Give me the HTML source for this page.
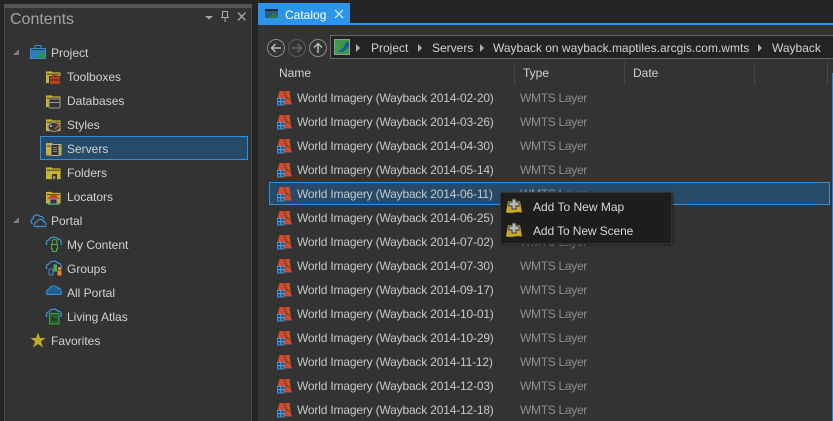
<!DOCTYPE html>
<html><head><meta charset="utf-8">
<style>
html,body{margin:0;padding:0;background:#242424;width:833px;height:421px;overflow:hidden}
body{position:relative;font-family:"Liberation Sans",sans-serif;font-size:12px;color:#cfd3d6}
.a{position:absolute}
.t{position:absolute;white-space:nowrap;line-height:16px;height:16px}
.r{color:#c4c8cb;letter-spacing:-.18px}
.g{color:#8f8f8f;letter-spacing:-.3px}
svg{position:absolute;overflow:visible}
</style></head><body>
<svg width="0" height="0" style="position:absolute">
<defs>
<symbol id="lyr" viewBox="0 0 16 16"><path d="M3.500 1H13.500L15.500 14.500H8.500V8H1.500Z" fill="#cc4f2a"/><path d="M8 1C8.500 5 10 8 15 10.500M11 7.500L9 10.500" stroke="#6a3020" stroke-width=".8" fill="none"/><path d="M1.500 8.500h3v3h-3zM5 8.500h3v3h-3zM1.500 12h3v3h-3zM5 12h3v3h-3z" fill="#2b3a46" stroke="#3d9be0" stroke-width=".9"/></symbol>
<symbol id="fld" viewBox="0 0 16 14"><path d="M0 1H6L7 2H15.500V13.500H0Z" fill="#c8b233"/><path d="M1 3.500H14.500V4.500H1Z" fill="#333"/></symbol>
<symbol id="add" viewBox="0 0 16 16"><path d="M2 3H14L16 14.500C11 13 6 16 0 14.500Z" fill="#c4ac2c"/><path d="M6 1H10V4H13V8H10V11H6V8H3V4H6Z" fill="#b8b8b8" stroke="#3a3a3a" stroke-width="1"/></symbol>
</defs></svg>

<!-- left panel -->
<div class="a" style="left:4px;top:4px;width:248px;height:417px;background:#333;border-right:1px solid #484848;border-left:1px solid #484848;box-sizing:border-box"></div>
<div class="a" style="left:4px;top:4px;width:248px;height:4px;background:#555"></div>
<div class="t" style="left:10px;top:11px;font-size:16px;line-height:18px;height:18px;color:#a3a3a3">Contents</div>
<svg style="left:200px;top:8px" width="50" height="16"><path d="M5 8H13L9 11.500Z" fill="#a8a8a8"/><path d="M22.500 3.500H27.500V9.500H22.500ZM21 9.500H29M25 10V14" stroke="#aaa" fill="none"/><path d="M38 4.500L45.500 12.500M45.500 4.500L38 12.500" stroke="#a8a8a8" stroke-width="1.300"/></svg>

<div class="a" style="left:40px;top:136px;width:208px;height:24px;background:#264a68;border:1px solid #2e8fe0;box-sizing:border-box"></div>

<svg style="left:12px;top:47px" width="10" height="10"><path d="M7 2V8H1Z" fill="#7d7d7d"/></svg>
<svg style="left:12px;top:215px" width="10" height="10"><path d="M7 2V8H1Z" fill="#7d7d7d"/></svg>

<!-- Project icon -->
<svg style="left:30px;top:44px" width="16" height="16"><path d="M.5 4.500H15.500V14.500H.5ZM5 4V1.500H11V4" fill="none" stroke="#3b8fd0"/><rect x="1" y="6" width="14" height="8" fill="#2f7ab8"/><path d="M6 14L10 9L15 7.500V14Z" fill="#2f8f52"/></svg>
<div class="t" style="left:51px;top:45px">Project</div>

<svg style="left:46px;top:70px" width="15" height="14"><use href="#fld"/><rect x="3" y="6" width="12" height="8" fill="#333"/><rect x="4" y="7" width="10" height="7" fill="#b8401f"/><rect x="7" y="5.500" width="4" height="2" fill="none" stroke="#b8401f"/><rect x="4" y="9.500" width="10" height="1" fill="#4a2a20"/></svg>
<div class="t" style="left:67px;top:69px">Toolboxes</div>

<svg style="left:46px;top:94px" width="15" height="14"><use href="#fld"/><rect x="3" y="5" width="11" height="9" rx="1" fill="#333" stroke="#999"/><path d="M3 8.500H14" stroke="#999"/></svg>
<div class="t" style="left:67px;top:93px">Databases</div>

<svg style="left:46px;top:118px" width="15" height="14"><use href="#fld"/><ellipse cx="8" cy="9" rx="6" ry="4.500" fill="#3a3a3a" stroke="#999"/><circle cx="5" cy="8" r="1" fill="#c0c0c0"/><path d="M9 11L14 6" stroke="#c85a30" stroke-width="1.500"/></svg>
<div class="t" style="left:67px;top:117px">Styles</div>

<svg style="left:46px;top:142px" width="15" height="14"><path d="M0 1H6L7 2H15.500V13.500H0Z" fill="#c8b233"/><path d="M1 3.500H14.500V4.500H1Z" fill="#264a68"/><rect x="5" y="2.500" width="8" height="11" fill="#333" stroke="#aaa"/><path d="M7 5.500H11M7 7.500H11M7 9.500H11" stroke="#888"/></svg>
<div class="t" style="left:67px;top:141px">Servers</div>

<svg style="left:46px;top:166px" width="15" height="14"><use href="#fld"/><path d="M6 8H11V14H6Z" fill="#333"/><path d="M7 9L10 11.500L7 14Z" fill="#999"/></svg>
<div class="t" style="left:67px;top:165px">Folders</div>

<svg style="left:46px;top:190px" width="15" height="15"><use href="#fld"/><path d="M1 9L7.500 3.500L14 9Z" fill="#c8401f"/><rect x="4" y="9" width="7" height="5" fill="#333" stroke="#6aa8d8"/><path d="M2 14.500H13" stroke="#3f9d50"/></svg>
<div class="t" style="left:67px;top:189px">Locators</div>

<svg style="left:30px;top:212px" width="17" height="16"><path d="M2.500 12C.5 11 .5 7.500 3 7C3 3 8 1.500 10 4.500C12 4 13.500 5.500 13.500 7" fill="none" stroke="#3a90d4" stroke-width="1.200"/><path d="M5 14.500C3.500 12.500 4.500 10 7 10C8 6.500 13 7 13.500 9.500C15.500 9.500 16.500 12.500 15.500 14.500Z" fill="#333" stroke="#3a90d4" stroke-width="1.200"/></svg>
<div class="t" style="left:51px;top:213px">Portal</div>

<svg style="left:46px;top:236px" width="16" height="16"><path d="M1 9C-.5 6 1 4 3 4C4 1 10 0 11.500 3C14 2.500 16 5 15 9" fill="none" stroke="#3a90d4" stroke-width="1.300"/><circle cx="8.500" cy="6" r="2.500" fill="#333" stroke="#4cb050"/><path d="M5.500 8.500H11.500V13H10.500V15.500H6.500V13H5.500Z" fill="#333" stroke="#4cb050"/></svg>
<div class="t" style="left:67px;top:237px">My Content</div>

<svg style="left:46px;top:260px" width="16" height="16"><path d="M1 9C-.5 6 1 4 3 4C4 1 10 0 11.500 3C14 2.500 16 5 15 9" fill="none" stroke="#3a90d4" stroke-width="1.300"/><rect x="7.500" y="4.500" width="3.500" height="7" fill="#4cb050"/><rect x="3" y="9" width="4" height="6" rx="1" fill="#333" stroke="#3a90d4"/><rect x="12" y="7" width="3" height="3" fill="#e08a30"/><rect x="11.500" y="10.500" width="4" height="5" fill="#e08a30"/></svg>
<div class="t" style="left:67px;top:261px">Groups</div>

<svg style="left:46px;top:284px" width="16" height="12"><path d="M1 10.500C-.5 8 1 5.500 3 5.500C4 1 10 1 11.500 4C14 3.500 16.500 7 15 10.500Z" fill="#1f5f90" stroke="#3a90d4"/></svg>
<div class="t" style="left:67px;top:285px">All Portal</div>

<svg style="left:46px;top:308px" width="16" height="17"><path d="M1 9C-.5 6 1 4 3 4C4 1 10 0 11.500 3C14 2.500 16 5 15 9" fill="none" stroke="#3a90d4" stroke-width="1.300"/><rect x="3.500" y="5.500" width="9.500" height="10.500" fill="#2c5a30" stroke="#44a04a"/><path d="M6 9H8V11H11V12.500H6Z" fill="#1c3a1e"/></svg>
<div class="t" style="left:67px;top:309px">Living Atlas</div>

<svg style="left:30px;top:332px" width="16" height="16"><path d="M8 .5L10 6H15.500L11 9.500L13 15.500L8 12L3 15.500L5 9.500L.5 6H6Z" fill="#c2ab2c"/></svg>
<div class="t" style="left:51px;top:333px">Favorites</div>

<!-- right pane -->
<div class="a" style="left:258px;top:25px;width:575px;height:396px;background:#333"></div>
<div class="a" style="left:258px;top:3px;width:92px;height:20px;background:#2b95ec"></div>
<div class="a" style="left:258px;top:23px;width:575px;height:2px;background:#2b95ec"></div>
<svg style="left:265px;top:9px" width="14" height="10"><rect width="13" height="9" fill="#2a5d7a"/><rect width="13" height="2" fill="#1f2f3a"/><path d="M3 9L8 4L13 6V9Z" fill="#2d7a3a"/></svg>
<div class="t" style="left:285px;top:7px;color:#fff">Catalog</div>
<svg style="left:334px;top:9px" width="10" height="10"><path d="M1 1L9 9M9 1L1 9" stroke="#dff0ff" stroke-width="1.200"/></svg>

<!-- nav -->
<svg style="left:266px;top:38px" width="64" height="20">
<circle cx="10" cy="10" r="8.500" fill="#333" stroke="#8a8a8a"/><path d="M15 10H6M9.500 6L5.500 10L9.500 14" stroke="#b8b8b8" stroke-width="1.500" fill="none"/>
<circle cx="31" cy="10" r="8.500" fill="#333" stroke="#5a5a5a"/><path d="M26 10H35M31.500 6L35.500 10L31.500 14" stroke="#666" stroke-width="1.500" fill="none"/>
<circle cx="52" cy="10" r="8.500" fill="#333" stroke="#8a8a8a"/><path d="M52 15V6M48 9.500L52 5.500L56 9.500" stroke="#b8b8b8" stroke-width="1.500" fill="none"/>
</svg>
<div class="a" style="left:330px;top:35px;width:504px;height:24px;background:#232323;border:1px solid #666;box-sizing:border-box"></div>
<svg style="left:334px;top:39px" width="17" height="17"><rect x=".5" y=".5" width="15" height="15" fill="#3c9a48" stroke="#999"/><path d="M4 13L9 9L12 3H15V8L9 13Z" fill="#1c5f96"/></svg>
<svg style="left:355px;top:44px" width="8" height="8"><path d="M1 0L5 4L1 8Z" fill="#b0b0b0"/></svg>
<svg style="left:417px;top:44px" width="8" height="8"><path d="M1 0L5 4L1 8Z" fill="#b0b0b0"/></svg>
<svg style="left:479px;top:44px" width="8" height="8"><path d="M1 0L5 4L1 8Z" fill="#b0b0b0"/></svg>
<svg style="left:757px;top:44px" width="8" height="8"><path d="M1 0L5 4L1 8Z" fill="#b0b0b0"/></svg>
<div class="t" style="left:371px;top:40px">Project</div>
<div class="t" style="left:432px;top:40px">Servers</div>
<div class="t" style="left:493px;top:40px">Wayback on wayback.maptiles.arcgis.com.wmts</div>
<div class="t" style="left:772px;top:40px">Wayback</div>

<!-- header -->
<div class="t" style="left:279px;top:65px">Name</div>
<div class="t" style="left:523px;top:65px">Type</div>
<div class="t" style="left:633px;top:65px">Date</div>
<div class="a" style="left:514px;top:62px;width:1px;height:23px;background:#484848"></div>
<div class="a" style="left:624px;top:62px;width:1px;height:23px;background:#484848"></div>
<div class="a" style="left:754px;top:62px;width:1px;height:23px;background:#484848"></div>
<div class="a" style="left:827px;top:62px;width:1px;height:23px;background:#484848"></div>

<!-- selected row -->
<div class="a" style="left:269px;top:182px;width:561px;height:23px;background:#264a68;border:1px solid #2e8fe0;box-sizing:border-box"></div>
<div class="a" style="left:832px;top:73px;width:1px;height:348px;background:#2b7fc4"></div>

<!-- rows -->
<svg style="left:276px;top:90px" width="16" height="16"><use href="#lyr"/></svg><div class="t r" style="left:297px;top:90px">World Imagery (Wayback 2014-02-20)</div><div class="t g" style="left:520px;top:90px">WMTS Layer</div>
<svg style="left:276px;top:114px" width="16" height="16"><use href="#lyr"/></svg><div class="t r" style="left:297px;top:114px">World Imagery (Wayback 2014-03-26)</div><div class="t g" style="left:520px;top:114px">WMTS Layer</div>
<svg style="left:276px;top:138px" width="16" height="16"><use href="#lyr"/></svg><div class="t r" style="left:297px;top:138px">World Imagery (Wayback 2014-04-30)</div><div class="t g" style="left:520px;top:138px">WMTS Layer</div>
<svg style="left:276px;top:162px" width="16" height="16"><use href="#lyr"/></svg><div class="t r" style="left:297px;top:162px">World Imagery (Wayback 2014-05-14)</div><div class="t g" style="left:520px;top:162px">WMTS Layer</div>
<svg style="left:276px;top:186px" width="16" height="16"><use href="#lyr"/></svg><div class="t r" style="left:297px;top:186px">World Imagery (Wayback 2014-06-11)</div><div class="t g" style="left:520px;top:186px">WMTS Layer</div>
<svg style="left:276px;top:210px" width="16" height="16"><use href="#lyr"/></svg><div class="t r" style="left:297px;top:210px">World Imagery (Wayback 2014-06-25)</div><div class="t g" style="left:520px;top:210px">WMTS Layer</div>
<svg style="left:276px;top:234px" width="16" height="16"><use href="#lyr"/></svg><div class="t r" style="left:297px;top:234px">World Imagery (Wayback 2014-07-02)</div><div class="t g" style="left:520px;top:234px">WMTS Layer</div>
<svg style="left:276px;top:258px" width="16" height="16"><use href="#lyr"/></svg><div class="t r" style="left:297px;top:258px">World Imagery (Wayback 2014-07-30)</div><div class="t g" style="left:520px;top:258px">WMTS Layer</div>
<svg style="left:276px;top:282px" width="16" height="16"><use href="#lyr"/></svg><div class="t r" style="left:297px;top:282px">World Imagery (Wayback 2014-09-17)</div><div class="t g" style="left:520px;top:282px">WMTS Layer</div>
<svg style="left:276px;top:306px" width="16" height="16"><use href="#lyr"/></svg><div class="t r" style="left:297px;top:306px">World Imagery (Wayback 2014-10-01)</div><div class="t g" style="left:520px;top:306px">WMTS Layer</div>
<svg style="left:276px;top:330px" width="16" height="16"><use href="#lyr"/></svg><div class="t r" style="left:297px;top:330px">World Imagery (Wayback 2014-10-29)</div><div class="t g" style="left:520px;top:330px">WMTS Layer</div>
<svg style="left:276px;top:354px" width="16" height="16"><use href="#lyr"/></svg><div class="t r" style="left:297px;top:354px">World Imagery (Wayback 2014-11-12)</div><div class="t g" style="left:520px;top:354px">WMTS Layer</div>
<svg style="left:276px;top:378px" width="16" height="16"><use href="#lyr"/></svg><div class="t r" style="left:297px;top:378px">World Imagery (Wayback 2014-12-03)</div><div class="t g" style="left:520px;top:378px">WMTS Layer</div>
<svg style="left:276px;top:402px" width="16" height="16"><use href="#lyr"/></svg><div class="t r" style="left:297px;top:402px">World Imagery (Wayback 2014-12-18)</div><div class="t g" style="left:520px;top:402px">WMTS Layer</div>

<!-- context menu -->
<div class="a" style="left:500px;top:192px;width:172px;height:52px;background:#1d1d1d;border:1px solid #333;box-sizing:border-box;box-shadow:1px 1px 2px #222"></div>
<svg style="left:506px;top:198px" width="16" height="16"><use href="#add"/></svg>
<div class="t" style="left:533px;top:199px;color:#d8d8d8">Add To New Map</div>
<svg style="left:506px;top:222px" width="16" height="16"><use href="#add"/></svg>
<div class="t" style="left:533px;top:223px;color:#d8d8d8;letter-spacing:-.1px">Add To New Scene</div>
</body></html>
